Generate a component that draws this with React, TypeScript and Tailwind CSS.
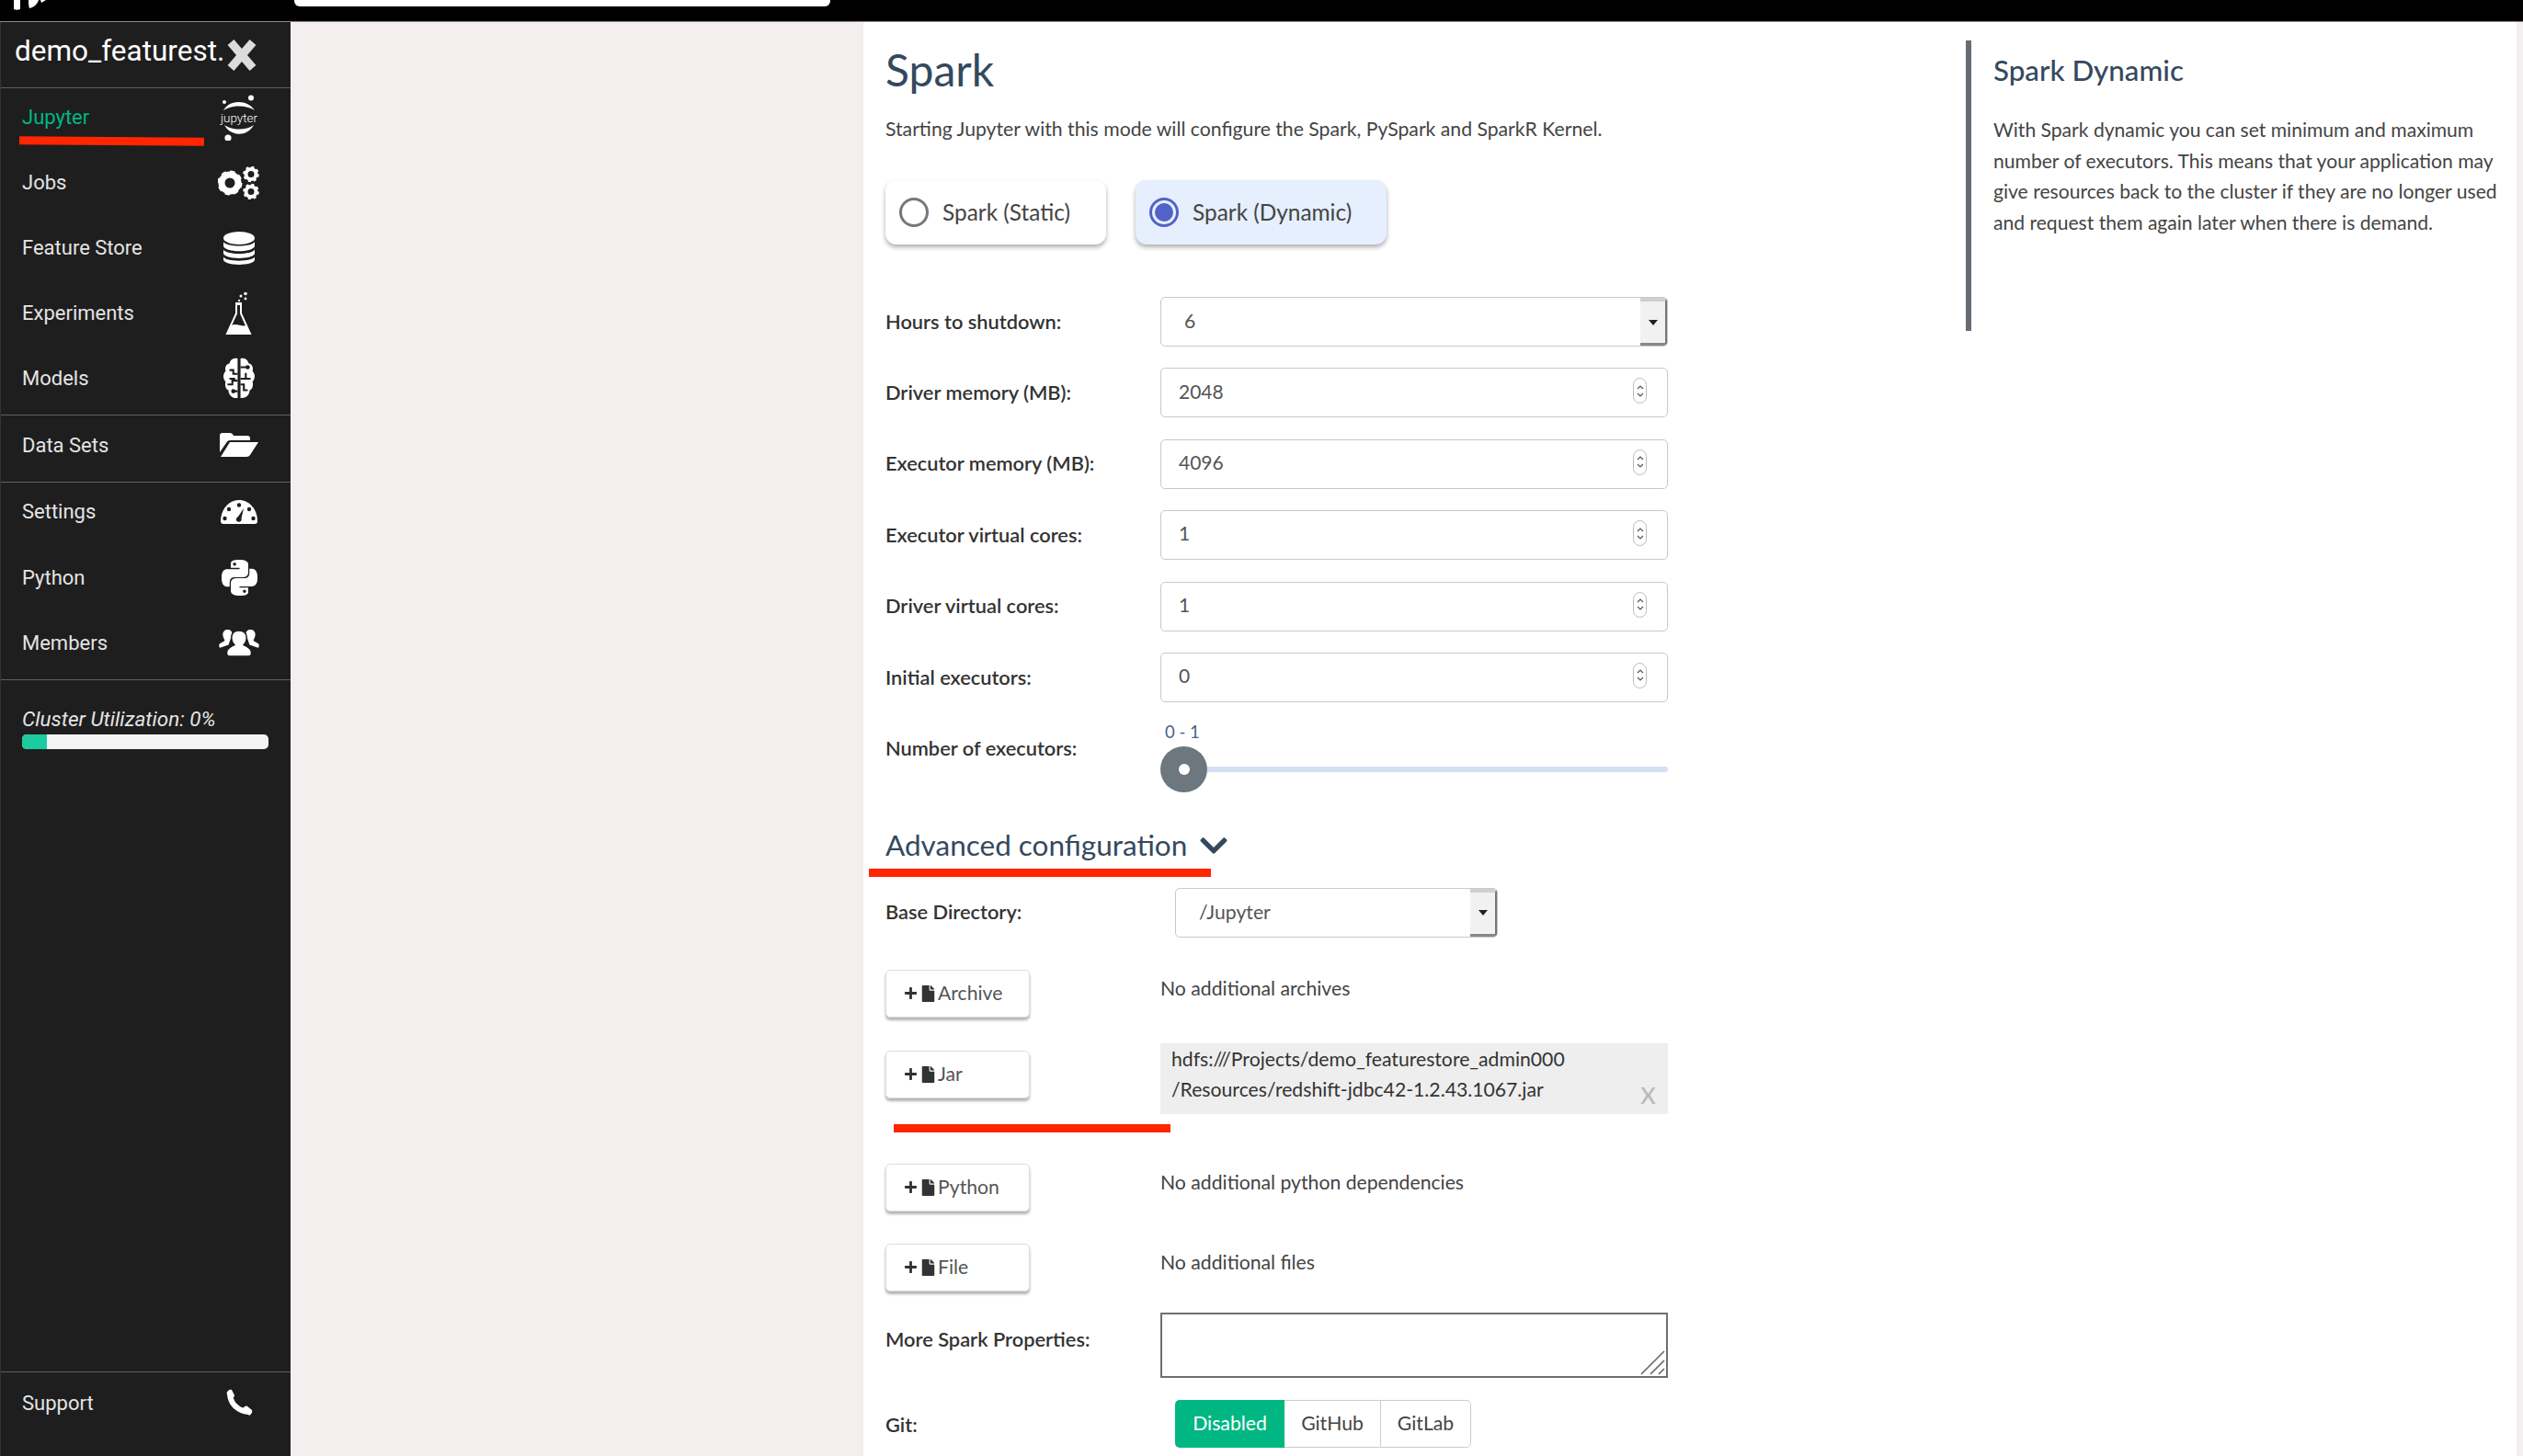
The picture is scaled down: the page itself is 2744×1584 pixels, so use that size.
import React from "react";
import { FaChevronDown, FaFile, FaPlus } from "react-icons/fa";
import { SiPython } from "react-icons/si";

const labelFont = "font-['Lato','Noto_Sans',sans-serif]";

function JupyterIcon() {
  return (
    <div className="relative w-[44px] h-[50px]">
      <svg viewBox="0 0 44 50" className="absolute inset-0 w-[44px] h-[50px]">
        <circle cx="35" cy="3.5" r="3" fill="#fff" />
        <circle cx="6" cy="8" r="2" fill="#fff" />
        <circle cx="10" cy="47" r="3.6" fill="#fff" />
        <path d="M5 17 C12 5 31 5 39 17 C30 11 14 11 5 17Z" fill="#fff" />
        <path d="M6 33 C14 39 30 39 38 33 C31 46 13 46 6 33Z" fill="#fff" />
      </svg>
      <span className="absolute left-0 top-[17px] w-[44px] text-center font-['Roboto',sans-serif] font-light text-[13.5px] leading-[16px] text-white">jupyter</span>
    </div>
  );
}

function FlaskIcon() {
  return (
    <svg viewBox="0 0 32 48" className="w-[32px] h-[48px]">
      <circle cx="23" cy="2.5" r="1.8" fill="#fff" />
      <circle cx="18" cy="5" r="1.5" fill="#fff" />
      <circle cx="23" cy="8" r="1.4" fill="#fff" />
      <circle cx="16" cy="10" r="1.2" fill="#fff" />
      <path d="M13 13 H18 V24 L28 46 H3 L13 24 Z" fill="none" stroke="#fff" strokeWidth="2" />
      <path d="M7.5 37 C13 34 19 39 24 37 L28 46 H3 Z" fill="#fff" />
      <rect x="12" y="12" width="7" height="3" fill="#fff" />
    </svg>
  );
}

function GearsIcon() {
  return (
    <svg viewBox="0 0 46 36" className="w-[46px] h-[36px]">
      <circle cx="13" cy="18" r="9" fill="none" stroke="#fff" strokeWidth="7" />
      <circle cx="13" cy="18" r="11.5" fill="none" stroke="#fff" strokeWidth="4" strokeDasharray="5 4" />
      <circle cx="36" cy="8.5" r="5.5" fill="none" stroke="#fff" strokeWidth="4" />
      <circle cx="36" cy="8.5" r="7.5" fill="none" stroke="#fff" strokeWidth="2.6" strokeDasharray="3 2.9" />
      <circle cx="36" cy="27.5" r="5.5" fill="none" stroke="#fff" strokeWidth="4" />
      <circle cx="36" cy="27.5" r="7.5" fill="none" stroke="#fff" strokeWidth="2.6" strokeDasharray="3 2.9" />
    </svg>
  );
}

function DatabaseIcon() {
  return (
    <svg viewBox="0 0 34 36" className="w-[34px] h-[36px]">
      <ellipse cx="17" cy="7" rx="17" ry="7" fill="#fff" />
      <path d="M0 11 C3 17 31 17 34 11 V16 C31 23 3 23 0 16 Z" fill="#fff" />
      <path d="M0 19.5 C3 25.5 31 25.5 34 19.5 V24 C31 30.5 3 30.5 0 24 Z" fill="#fff" />
      <path d="M0 27.5 C3 33 31 33 34 27.5 V31 C31 37.5 3 37.5 0 31 Z" fill="#fff" />
    </svg>
  );
}

function BrainIcon() {
  return (
    <svg viewBox="0 0 34 44" className="w-[36px] h-[46px]">
      <path d="M15.5 1 C11 0 8 2 7 6 C3 7 2 11 3 14 C0 17 0 22 3 25 C2 29 3 33 6 34 C6 39 10 43 15.5 42 Z" fill="#fff" />
      <path d="M18.5 1 C23 0 26 2 27 6 C31 7 32 11 31 14 C34 17 34 22 31 25 C32 29 31 33 28 34 C28 39 24 43 18.5 42 Z" fill="#fff" />
      <path d="M7 22 H13 M7 13 H11 V17 H15.5 M15.5 24 H10 V29 M5 28 H10 M11 35 H15.5" fill="none" stroke="#1e1e1e" strokeWidth="2" />
      <path d="M18.5 10 H26 M18.5 22 H24 V16 M18.5 28 H22 V34 H26 M24 22 H29" fill="none" stroke="#1e1e1e" strokeWidth="2" />
      <circle cx="11" cy="35" r="2.2" fill="#1e1e1e" />
      <circle cx="26" cy="10" r="2.2" fill="#1e1e1e" />
    </svg>
  );
}

function FolderIcon() {
  return (
    <svg viewBox="0 0 42 26" className="w-[42px] h-[26px]">
      <path d="M0 3 C0 1 1 0 3 0 H11 C13 0 14 1 15 3 H30 C32 3 33 4 33 6 V8 H12 C9 8 8 9 7 11 L0 21 Z" fill="#fff" />
      <path d="M11 10 H42 L33 24 C32 25 31 26 29 26 H1 Z" fill="#fff" />
    </svg>
  );
}

function GaugeIcon() {
  return (
    <svg viewBox="0 0 40 26" className="w-[40px] h-[26px]">
      <path d="M0 23 C0 10 9 0 20 0 C31 0 40 10 40 23 C40 25 39 26 37 26 H3 C1 26 0 25 0 23 Z" fill="#fff" />
      <g fill="#1e1e1e">
        <circle cx="20" cy="5.5" r="2.2" />
        <circle cx="9" cy="10" r="2.2" />
        <circle cx="31" cy="10" r="2.2" />
        <circle cx="4.5" cy="20" r="2.2" />
        <circle cx="35.5" cy="20" r="2.2" />
        <path d="M25 9 L22.5 20 C23.5 23 20 25 17.5 23 C16 21 17 19 19 18 Z" />
      </g>
    </svg>
  );
}

function UsersIcon() {
  return (
    <svg viewBox="0 0 42 28" className="w-[44px] h-[29px]">
      <path d="M9 0 C12 0 14 2 14 5 C13 8 12 9 12 10 L10 16 L1 19 C0 19 0 17 0 16 C0 14 5 13 6 11 C4 8 4 6 4 5 C4 2 6 0 9 0 Z" fill="#fff" />
      <path d="M33 0 C30 0 28 2 28 5 C29 8 30 9 30 10 L32 16 L41 19 C42 19 42 17 42 16 C42 14 37 13 36 11 C38 8 38 6 38 5 C38 2 36 0 33 0 Z" fill="#fff" />
      <path d="M21 1 C26 1 29 4 29 9 C29 12 27 15 26 16 C29 18 34 19 34 24 V25 C34 27 33 28 31 28 H11 C9 28 8 27 8 25 V24 C8 19 13 18 16 16 C15 15 13 12 13 9 C13 4 16 1 21 1 Z" fill="#fff" stroke="#1e1e1e" strokeWidth="1.5" />
    </svg>
  );
}

function PhoneIcon() {
  return (
    <svg viewBox="0 0 30 30" className="w-[30px] h-[30px]">
      <path d="M5 5 C5 15 13 24 25 25" fill="none" stroke="#fff" strokeWidth="6" strokeLinecap="round" />
      <path d="M1.5 5 C2 2 5 0 7 1 L10 7 C10 9 8 10 6 11 Z" fill="#fff" />
      <path d="M19 21 C21 19 23 18 24 19 L29 23 C30 25 28 28 26 29 Z" fill="#fff" />
    </svg>
  );
}

function NavItem({ label, icon, active, h = "h-[71px]", pb = "pb-[8px]" }: { label: string; icon: React.ReactNode; active?: boolean; h?: string; pb?: string }) {
  return (
    <div className={`${h} ${pb} flex items-center justify-between pl-[23px]`}>
      <span className={`font-['Roboto',sans-serif] text-[22px] ${active ? "text-[#00b783]" : "text-[#e4e4e4]"}`}>{label}</span>
      <div className="w-[56px] mr-[28px] flex items-center justify-center text-white">{icon}</div>
    </div>
  );
}

function Divider() {
  return <div className="h-[1px] bg-[#5f5f5f]" />;
}

function Sidebar() {
  return (
    <aside className="relative w-[316px] shrink-0 bg-[#1e1e1e] border-l border-[#333] flex flex-col">
      <div className="h-[71px] flex items-start pl-[15px] pt-[11px]">
        <span className="font-['Roboto',sans-serif] text-[31.5px] leading-[42px] text-white">demo_featurest.</span>
        <svg viewBox="0 0 34 34" className="absolute left-[245px] top-[19px] w-[34px] h-[34px]">
          <path d="M5 3 L29 31 M29 3 L5 31" stroke="#dcdcdc" strokeWidth="9" fill="none" />
        </svg>
      </div>
      <Divider />
      <NavItem label="Jupyter" active icon={<JupyterIcon />} />
      <NavItem label="Jobs" icon={<GearsIcon />} />
      <NavItem label="Feature Store" icon={<DatabaseIcon />} />
      <NavItem label="Experiments" icon={<FlaskIcon />} />
      <NavItem label="Models" icon={<BrainIcon />} />
      <Divider />
      <NavItem label="Data Sets" h="h-[72px]" icon={<FolderIcon />} />
      <Divider />
      <NavItem label="Settings" icon={<GaugeIcon />} />
      <NavItem label="Python" h="h-[72px]" icon={<SiPython className="w-[39px] h-[39px]" />} />
      <NavItem label="Members" h="h-[71px]" icon={<UsersIcon />} />
      <Divider />
      <div className="pl-[23px] pt-[27px]">
        <div className="font-['Roboto',sans-serif] italic text-[22.5px] leading-[30px] text-[#e4e4e4]">Cluster Utilization: 0%</div>
        <div className="mt-[2px] w-[268px] h-[16px] rounded-[5px] bg-[#f3f3f3] overflow-hidden">
          <div className="w-[27px] h-full bg-[#1acca0]" />
        </div>
      </div>
      <div className="mt-auto">
        <Divider />
        <NavItem label="Support" h="h-[66px]" pb="pb-0" icon={<PhoneIcon />} />
        <div className="h-[25px]" />
      </div>
    </aside>
  );
}

function Label({ children, h = "h-[54px]" }: { children: React.ReactNode; h?: string }) {
  return <div className={`${h} flex items-center font-semibold text-[21.8px] text-[#333] ${labelFont}`}>{children}</div>;
}

function SelectBox({ value, width, pl }: { value: string; width: string; pl: string }) {
  return (
    <div className={`${width} h-[54px] flex rounded-[5px] border border-[#c9c9c9] bg-white overflow-hidden ${labelFont}`}>
      <div className={`flex-1 flex items-center ${pl} text-[21.2px] text-[#555]`}>{value}</div>
      <div className="w-[29px] flex items-center justify-center bg-[#f1f1f1] border-t-[4px] border-t-[#cfcfcf] border-r-[2px] border-r-[#777] border-b-[3px] border-b-[#888]">
        <div className="w-0 h-0 border-l-[5px] border-r-[5px] border-t-[6px] border-l-transparent border-r-transparent border-t-[#222]" />
      </div>
    </div>
  );
}

function NumberBox({ value }: { value: string }) {
  return (
    <div className={`w-[552px] h-[54px] flex items-center justify-between rounded-[5px] border border-[#c9c9c9] bg-white pl-[19px] pr-[22px] ${labelFont}`}>
      <span className="text-[21px] text-[#555] -mt-[4px]">{value}</span>
      <div className="w-[15px] h-[28px] -mt-[4px] rounded-full border border-[#bbb] flex flex-col items-center justify-center gap-[3px]">
        <svg viewBox="0 0 8 5" className="w-[8px] h-[5px]"><path d="M1 4 L4 1 L7 4" fill="none" stroke="#555" strokeWidth="1.2" /></svg>
        <svg viewBox="0 0 8 5" className="w-[8px] h-[5px]"><path d="M1 1 L4 4 L7 1" fill="none" stroke="#555" strokeWidth="1.2" /></svg>
      </div>
    </div>
  );
}

function FormRow({ label, value }: { label: string; value: string }) {
  return (
    <div className="flex mt-[23.4px]">
      <div className="w-[299px]"><Label>{label}</Label></div>
      <NumberBox value={value} />
    </div>
  );
}

function AddButton({ label }: { label: string }) {
  return (
    <div className={`w-[157px] h-[52px] flex items-center pl-[19px] rounded-[5px] bg-white border border-[#ddd] shadow-[0_3px_3px_rgba(0,0,0,0.3)] text-[21.2px] text-[#555] ${labelFont}`}>
      <FaPlus className="w-[15px] h-[15px] text-[#333]" />
      <FaFile className="w-[15px] h-[18px] ml-[4px] text-[#333]" />
      <span className="ml-[3px]">{label}</span>
    </div>
  );
}

function AddRow({ label, text, mt }: { label: string; text: string; mt: string }) {
  return (
    <div className={`flex ${mt}`}>
      <div className="w-[299px]"><AddButton label={label} /></div>
      <div className={`h-[42px] flex items-center text-[21.2px] text-[#444] ${labelFont}`}>{text}</div>
    </div>
  );
}

function RadioCard({ label, selected, width }: { label: string; selected?: boolean; width: string }) {
  return (
    <div className={`${width} h-[70px] flex items-center pl-[15px] rounded-[12px] shadow-[0_3px_5px_rgba(0,0,0,0.32)] ${selected ? "bg-[#e5effd]" : "bg-white"}`}>
      {selected ? (
        <div className="w-[32px] h-[32px] rounded-full border-[3px] border-[#5163c7] flex items-center justify-center">
          <div className="w-[20px] h-[20px] rounded-full bg-[#5163c7]" />
        </div>
      ) : (
        <div className="w-[32px] h-[32px] rounded-full border-[3px] border-[#777]" />
      )}
      <span className={`ml-[15px] text-[24.4px] text-[#444] ${labelFont}`}>{label}</span>
    </div>
  );
}

function Form() {
  return (
    <div className="w-[851px] shrink-0">
      <h1 className={`mt-[19px] h-[66px] flex items-center text-[48px] text-[#34495e] ${labelFont}`}>Spark</h1>
      <p className={`mt-[17px] h-[30px] flex items-center text-[21.2px] text-[#444] ${labelFont}`}>Starting Jupyter with this mode will configure the Spark, PySpark and SparkR Kernel.</p>
      <div className="mt-[40px] flex gap-[32px]">
        <RadioCard label="Spark (Static)" width="w-[240px]" />
        <RadioCard label="Spark (Dynamic)" width="w-[273px]" selected />
      </div>
      <div className="flex mt-[57px]">
        <div className="w-[299px]"><Label>Hours to shutdown:</Label></div>
        <SelectBox value="6" width="w-[552px]" pl="pl-[25px]" />
      </div>
      <FormRow label="Driver memory (MB):" value="2048" />
      <FormRow label="Executor memory (MB):" value="4096" />
      <FormRow label="Executor virtual cores:" value="1" />
      <FormRow label="Driver virtual cores:" value="1" />
      <FormRow label="Initial executors:" value="0" />

      <div className="flex mt-[18px] h-[80px]">
        <div className="w-[299px]"><Label h="h-[64px]">Number of executors:</Label></div>
        <div className="w-[552px]">
          <div className={`h-[30px] pl-[5px] flex items-center text-[18.5px] text-[#4a6285] ${labelFont}`}>0 - 1</div>
          <div className="flex items-center">
            <div className="w-[51px] h-[50px] rounded-full bg-[#6c7780] flex items-center justify-center">
              <div className="w-[12px] h-[12px] rounded-full bg-white" />
            </div>
            <div className="flex-1 h-[6px] rounded-r-full bg-[#d3dff2]" />
          </div>
        </div>
      </div>

      <div className={`relative mt-[38px] h-[40px] flex items-center text-[31.5px] text-[#34495e] ${labelFont}`}>
        Advanced configuration
        <FaChevronDown className="ml-[14px] w-[30px] h-[34px]" />
        <div className="absolute left-[-18px] top-[45px] w-[372px] h-[9px] bg-[#ff2600]" />
      </div>

      <div className="flex mt-[26px]">
        <div className="w-[315px]"><Label h="h-[53px]">Base Directory:</Label></div>
        <SelectBox value="/Jupyter" width="w-[351px]" pl="pl-[25px]" />
      </div>

      <AddRow label="Archive" text="No additional archives" mt="mt-[35px]" />

      <div className="relative flex mt-[28px]">
        <div className="w-[299px] pt-[8px]"><AddButton label="Jar" /></div>
        <div className={`relative w-[552px] h-[77px] bg-[#eeeeee] pl-[12px] pt-[1px] text-[21.2px] leading-[33px] text-[#333] ${labelFont}`}>
          <div>hdfs:///Projects/demo_featurestore_admin000</div>
          <div>/Resources/redshift-jdbc42-1.2.43.1067.jar</div>
          <span className="absolute right-[13px] bottom-[7px] text-[34px] leading-[34px] text-[#bbb]">x</span>
        </div>
        <div className="absolute left-[9px] top-[88px] w-[301px] h-[9px] bg-[#ff2600]" />
      </div>

      <AddRow label="Python" text="No additional python dependencies" mt="mt-[54px]" />
      <AddRow label="File" text="No additional files" mt="mt-[35px]" />

      <div className="flex mt-[23px]">
        <div className="w-[299px]"><Label h="h-[58px]">More Spark Properties:</Label></div>
        <div className="relative w-[552px] h-[71px] border-2 border-[#6f6f6f] bg-white">
          <svg viewBox="0 0 28 28" className="absolute right-[1px] bottom-[1px] w-[28px] h-[28px]">
            <path d="M2 27 L27 2 M12 27 L27 12 M21 27 L27 21" stroke="#666" strokeWidth="1.6" fill="none" />
          </svg>
        </div>
      </div>

      <div className="flex mt-[24px]">
        <div className="w-[315px]"><Label>Git:</Label></div>
        <div className={`flex h-[52px] text-[21.2px] ${labelFont}`}>
          <div className="w-[119px] flex items-center justify-center rounded-l-[5px] bg-[#00b783] text-white">Disabled</div>
          <div className="w-[104px] flex items-center justify-center border-y border-[#ccc] text-[#444]">GitHub</div>
          <div className="w-[99px] flex items-center justify-center rounded-r-[5px] border border-[#ccc] text-[#444]">GitLab</div>
        </div>
      </div>
    </div>
  );
}

function Info() {
  return (
    <div className="ml-[324px] mt-[20px] w-[596px] h-[316px] border-l-[6px] border-[#666d74] pl-[24px] shrink-0">
      <h2 className={`mt-[12px] h-[40px] flex items-center text-[31.3px] font-medium text-[#34495e] ${labelFont}`}>Spark Dynamic</h2>
      <p className={`mt-[28px] w-[572px] text-[21.1px] leading-[33.6px] text-[#444] ${labelFont}`}>
        With Spark dynamic you can set minimum and maximum number of executors. This means that your application may give resources back to the cluster if they are no longer used and request them again later when there is demand.
      </p>
    </div>
  );
}

export default function App() {
  return (
    <div className="relative w-[2744px] h-[1584px] overflow-hidden flex flex-col bg-[#f2efee]">
      <header className="h-[23px] shrink-0 bg-black flex items-start">
        <svg viewBox="0 0 40 16" className="ml-[14px] w-[40px] h-[16px]">
          <path d="M1 0 H8 V10 C6 11 3 11 1 10 Z M17 0 H28 C27 4 23 8 18 9 C17 6 17 3 17 0 Z M30 0 H36 L31 3 Z" fill="#fff" />
        </svg>
        <div className="ml-[266px] w-[583px] h-[7px] rounded-b-[6px] bg-white" />
      </header>
      <div className="h-[1px] bg-[#8a8a8a] shrink-0" />
      <div className="flex-1 flex min-h-0">
        <Sidebar />
        <div className="w-[623px] shrink-0" />
        <main className="w-[1798px] shrink-0 bg-white pl-[24px] flex items-start">
          <Form />
          <Info />
        </main>
      </div>
      <div className="absolute left-[21px] top-[149px] w-[201px] h-[9px] bg-[#ff2600] rotate-[0.4deg]" />
    </div>
  );
}
